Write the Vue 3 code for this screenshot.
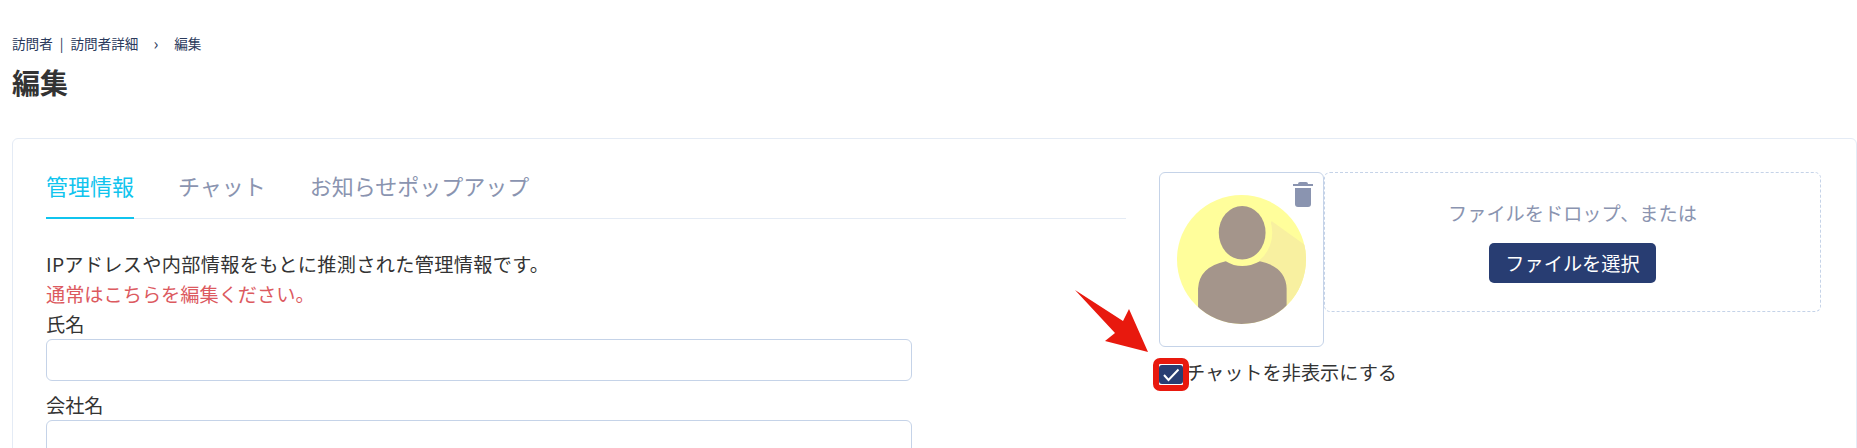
<template>
  <div class="page">
    <nav class="crumbs">
      <span>訪問者</span>
      <span class="bar">|</span>
      <span>訪問者詳細</span>
      <span class="sep">›</span>
      <span>編集</span>
    </nav>
    <h1 class="title">編集</h1>

    <section class="card">
      <div class="main">
        <ul class="tabs">
          <li
            v-for="(tab, i) in tabs"
            :key="tab"
            class="tab"
            :class="{ active: i === 0 }"
          >
            {{ tab }}
          </li>
        </ul>
        <p class="note lead">IPアドレスや内部情報をもとに推測された管理情報です。</p>
        <p class="note red">通常はこちらを編集ください。</p>
        <div v-for="field in fields" :key="field" class="field">
          <label class="label">{{ field }}</label>
          <input class="input" type="text" />
        </div>
      </div>

      <aside class="side">
        <div class="upload">
          <div class="preview">
            <svg class="trash" viewBox="0 0 20 25">
              <path d="M5 2 Q5 0 7 0 H13 Q15 0 15 2 H20 V4 H0 V2 Z" fill="#8a94b0" />
              <path d="M2 6 H18 V22 Q18 25 15 25 H5 Q2 25 2 22 Z" fill="#8a94b0" />
            </svg>
            <svg class="avatar" viewBox="352 135 386 386">
              <defs>
                <clipPath id="round">
                  <circle cx="545" cy="328" r="193" />
                </clipPath>
              </defs>
              <circle cx="545" cy="328" r="193" fill="#fffe9b" />
              <g clip-path="url(#round)">
                <path d="M635 213 L745 292 V480 H600 V330 Z" fill="#f8f0a0" />
                <ellipse cx="547" cy="248" rx="90" ry="100" fill="#fffe9b" />
                <path d="M415 530 V415 Q418 350 498 333 Q545 362 600 333 Q678 350 680 415 V530 Z" fill="#a4958b" />
                <ellipse cx="547" cy="248" rx="70" ry="80" fill="#a4958b" />
              </g>
            </svg>
          </div>
          <div class="drop">
            <p class="drop-text">ファイルをドロップ、または</p>
            <button class="pick" type="button">ファイルを選択</button>
          </div>
        </div>
        <label class="check">
          <span class="box">
            <svg viewBox="0 0 24 19" width="24" height="19">
              <path d="M5 10 L9.5 15 L19.5 4.5" fill="none" stroke="#fff" stroke-width="2" />
            </svg>
          </span>
          <span>チャットを非表示にする</span>
        </label>
      </aside>
    </section>

    <!-- annotation drawn over the screenshot -->
    <svg class="arrow" viewBox="0 0 80 70" width="80" height="70">
      <path d="M2 2 L50 33 L56 21 L75 64 L32 53 L42 45 Z" fill="#e8190e" />
    </svg>
    <div class="mark"></div>
  </div>
</template>

<script setup>
const tabs = ["管理情報", "チャット", "お知らせポップアップ"];
const fields = ["氏名", "会社名"];
</script>

<style>
html,
body {
  overflow: hidden;
  background: #fff;
}
</style>

<style scoped>
.page {
  position: relative;
  box-sizing: border-box;
  height: 448px;
  overflow: hidden;
  padding: 34px 0 0 12px;
  font-family: "Noto Sans CJK JP", "Noto Sans", sans-serif;
  color: #333;
}

.crumbs {
  display: flex;
  align-items: center;
  height: 18px;
  font-size: 13.6px;
  color: #2b3a5c;
}

.bar {
  margin: 0 7px;
}

.sep {
  margin: 0 16px 0 15px;
  font-size: 16px;
  line-height: 18px;
}

.title {
  margin: 11px 0 0;
  font-size: 28px;
  line-height: 38px;
  font-weight: 700;
  color: #333;
}

.card {
  display: flex;
  gap: 33px;
  box-sizing: border-box;
  margin-top: 37px;
  height: 400px;
  padding: 33px 32px 33px 33px;
  border: 1px solid #e4ebf5;
  border-radius: 6px;
}

.main {
  width: 1080px;
  flex: none;
}

.tabs {
  display: flex;
  gap: 44px;
  margin: 0 0 30px;
  padding: 0;
  height: 47px;
  list-style: none;
  border-bottom: 1px solid #e4ebf5;
  box-sizing: border-box;
}

.tab {
  height: 47px;
  box-sizing: border-box;
  font-size: 22px;
  line-height: 26px;
  color: #8a94b0;
}

.tab.active {
  color: #10c4ee;
  border-bottom: 2px solid #10c4ee;
}

.note {
  margin: 0;
  font-size: 19.2px;
  line-height: 30px;
  color: #333;
}

.note.lead {
  letter-spacing: 0.3px;
}

.note.red {
  color: #dc5a5f;
}

.field {
  margin-bottom: 9px;
}

.label {
  display: block;
  font-size: 19.2px;
  line-height: 30px;
}

.input {
  display: block;
  box-sizing: border-box;
  width: 866px;
  height: 42px;
  border: 1px solid #c5d3e8;
  border-radius: 6px;
  background: #fff;
}

.side {
  flex: 1;
}

.upload {
  display: flex;
  align-items: flex-start;
}

.preview {
  position: relative;
  box-sizing: border-box;
  display: flex;
  align-items: center;
  justify-content: center;
  flex: none;
  width: 165px;
  height: 175px;
  border: 1px solid #c5d3e8;
  border-radius: 6px;
}

.avatar {
  width: 129px;
  height: 129px;
  margin-top: -1px;
}

.trash {
  position: absolute;
  top: 9px;
  right: 10px;
  width: 20px;
  height: 25px;
}

.drop {
  box-sizing: border-box;
  display: flex;
  flex-direction: column;
  align-items: center;
  flex: none;
  width: 497px;
  height: 140px;
  padding-top: 26px;
  border: 1px dashed #c5d3e8;
  border-radius: 6px;
}

.drop-text {
  margin: 0 0 15px;
  font-size: 19.2px;
  line-height: 29px;
  color: #8a94b0;
}

.pick {
  width: 167px;
  height: 40px;
  padding: 0;
  border: none;
  border-radius: 5px;
  background: #283d72;
  color: #fff;
  font-family: inherit;
  font-size: 19.2px;
}

.check {
  display: flex;
  align-items: flex-start;
  gap: 3px;
  margin-top: 11px;
  font-size: 19.2px;
  line-height: 29px;
}

.box {
  display: block;
  width: 24px;
  height: 19px;
  margin-top: 7px;
  border-radius: 3px;
  background: #283d72;
}

.box svg {
  display: block;
}

.arrow {
  position: absolute;
  left: 1073px;
  top: 288px;
}

.mark {
  position: absolute;
  left: 1153px;
  top: 358px;
  box-sizing: border-box;
  width: 36px;
  height: 33px;
  border: 6px solid #e8190e;
  border-radius: 7px;
}
</style>
